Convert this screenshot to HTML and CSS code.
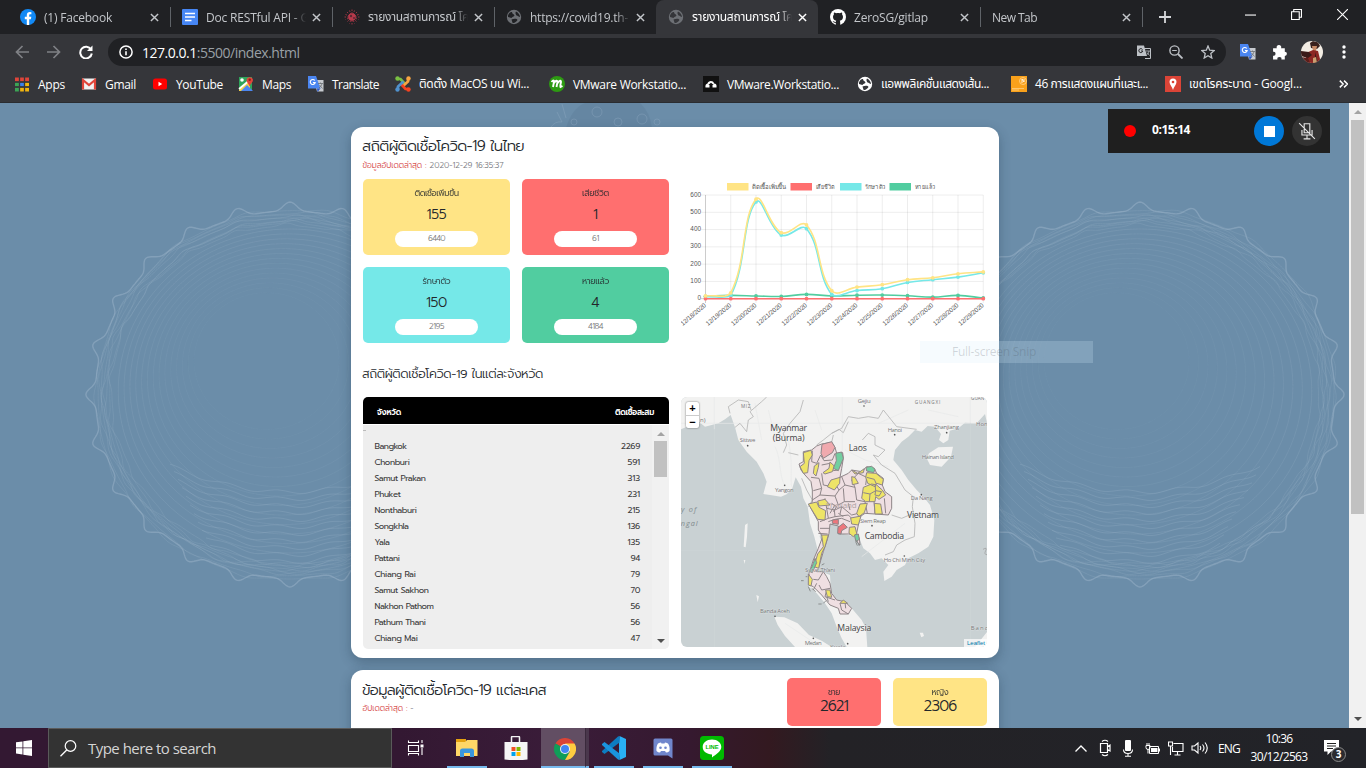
FILE: index.html
```html
<!DOCTYPE html>
<html lang="th">
<head>
<meta charset="utf-8">
<title>รายงานสถานการณ์ โควิด-19</title>
<link rel="stylesheet" href="styles.css">
</head>
<body>
<svg width="0" height="0" class="defs">
  <symbol id="x" viewBox="0 0 10 10"><path d="M1 1l8 8M9 1l-8 8" stroke="currentColor" stroke-width="1.6"/></symbol>
  <symbol id="globe" viewBox="0 0 16 16"><circle cx="8" cy="8" r="7.2" fill="currentColor"/><path d="M2 6.500C3 3.500 5 2.500 6 3C6 5 8 5 8.500 6.500C8 8 6 7.500 5.500 9C4 9 3.500 8 2 8zM10 2.500C12.500 3.500 14 6 14 8C12.500 8 12 6.500 10.500 6.500C9.500 5 9 4 10 2.500zM5.500 10.500C8 9.500 11 9.500 11.500 11C10 13 8.500 14.500 6.500 13.800z" fill="var(--cut)"/></symbol>
  <symbol id="gt" viewBox="0 0 16 16"><path d="M6 4h9.500v11.500H9z" fill="#c8cbd0"/><path d="M0 0h8l4.500 12.500H0z" fill="#4b86f1"/><path d="M9 12.500h3.500L9.500 16z" fill="#2a56c6"/><path d="M6.800 4.500A2.500 2.500 0 1 0 7.200 6.600H4.900" fill="none" stroke="#fff" stroke-width="1.100"/><path d="M10 7.500h5M12.500 6.500v1M14 7.500c-.5 2-1.500 3.500-3 4.500M11.500 9l3 3.500" fill="none" stroke="#6b7075" stroke-width=".8"/></symbol>
</svg>

<div class="tabs">
  <div class="tab"><svg viewBox="0 0 16 16"><circle cx="8" cy="8" r="8" fill="#1289f5"/><path d="M6.800 16V10.200H4.800V7.800H6.800V6.200C6.800 4 8 3 9.800 3L11.400 3.200V5.200H10.300C9.400 5.200 9.200 5.700 9.200 6.300V7.800H11.300L10.900 10.200H9.200V16z" fill="#fff"/></svg><span class="t"><b data-w="68">(1) Facebook</b></span><svg class="x"><use href="#x"/></svg></div>
  <div class="tab"><svg viewBox="0 0 16 16"><rect width="16" height="16" rx="1" fill="#4686f4"/><path d="M3 4.500h10M3 8h10M3 11.500h6.500" stroke="#fff" stroke-width="1.500"/></svg><span class="t"><b data-w="103">Doc RESTful API - G</b></span><svg class="x"><use href="#x"/></svg></div>
  <div class="tab"><svg viewBox="0 0 16 16"><circle cx="8" cy="8" r="3.800" fill="#b83a4b"/><path d="M8 .5v15M.5 8h15M3 3l10 10M13 3L3 13M5.500 1.500l5 13M1.500 5.500l13 5M10.500 1.500l-5 13M14.500 5.500l-13 5" stroke="#b83a4b" stroke-width=".8" stroke-dasharray="1.500 1.200"/><circle cx="7" cy="7" r="1.200" fill="#5b2a34"/><circle cx="10" cy="9" r="1" fill="#5b2a34"/></svg><span class="t"><b data-w="101">รายงานสถานการณ์ โค</b></span><svg class="x"><use href="#x"/></svg></div>
  <div class="tab nosep"><svg class="dim"><use href="#globe"/></svg><span class="t"><b data-w="98">https://covid19.th-</b></span><svg class="x"><use href="#x"/></svg></div>
  <div class="tab active nosep"><svg class="dim"><use href="#globe"/></svg><span class="t"><b data-w="101">รายงานสถานการณ์ โค</b></span><svg class="x"><use href="#x"/></svg></div>
  <div class="tab"><svg viewBox="0 0 16 16"><circle cx="8" cy="8" r="8" fill="#fff"/><path d="M5.800 16v-2.200c-2 .4-2.500-.8-3.200-1.700c1.300-.2 1.500 1.200 3.200.8c0-.5.2-.9.500-1.100C4 11.500 3 10.200 3 7.800c0-1 .4-1.700.9-2.300c-.2-.7-.1-1.500.1-2.100c.8 0 1.500.4 2.100.9c1.200-.3 2.600-.3 3.800 0c.6-.5 1.300-.9 2.100-.9c.2.600.3 1.400.1 2.100c.5.600.9 1.300.9 2.300c0 2.400-1 3.700-3.300 4c.3.300.5.800.5 1.500V16z" fill="#202124"/></svg><span class="t"><b data-w="74">ZeroSG/gitlap</b></span><svg class="x"><use href="#x"/></svg></div>
  <div class="tab"><span class="t"><b data-w="45">New Tab</b></span><svg class="x"><use href="#x"/></svg></div>
  <svg class="plus" viewBox="0 0 12 12"><path d="M6 0v12M0 6h12" stroke="#d5d7da" stroke-width="1.800"/></svg>
  <div class="win">
    <svg viewBox="0 0 10 10"><path d="M0 5.500h10" stroke="#fff"/></svg>
    <svg viewBox="0 0 10 10"><path d="M2.500 2.500V.5h7v7h-2M.5 2.500h7v7h-7z" fill="none" stroke="#fff"/></svg>
    <svg viewBox="0 0 10 10"><path d="M0 0l10 10M10 0L0 10" stroke="#fff"/></svg>
  </div>
</div>

<div class="toolbar">
  <svg class="nav dimnav" viewBox="0 0 14 14"><path d="M14 7H1.500M7.500 1L1.500 7l6 6"/></svg>
  <svg class="nav dimnav" viewBox="0 0 14 14"><path d="M0 7h12.500M6.500 1l6 6-6 6"/></svg>
  <svg class="nav" viewBox="0 0 14 14"><path d="M12 4.500A5.800 5.800 0 1 0 12.800 8.500" stroke-width="2"/><path d="M13.500.5v5.500H8z" fill="#fff" stroke="none"/></svg>
  <div class="omni">
    <svg viewBox="0 0 14 14"><circle cx="7" cy="7" r="6.100" fill="none" stroke="#fff" stroke-width="1.500"/><path d="M7 6.200v4M7 3.500v1.500" stroke="#fff" stroke-width="1.600"/></svg>
    <span class="url"><b data-w="157.500"><i>127.0.0.1</i>:5500/index.html</b></span>
    <svg class="g1" viewBox="0 0 14 14"><path d="M6.500 3.500h7v10H8" fill="none" stroke="#bdc1c6"/><path d="M0 .5h7l3 10.500H0z" fill="#bdc1c6"/><path d="M5.500 4.500A2 2 0 1 0 5.800 6H4" fill="none" stroke="#202124"/><path d="M9 6h4M12 6c-.3 2-1 3-2 3.500M10 7.500l2.500 3" stroke="#bdc1c6" fill="none" stroke-width=".8"/></svg>
    <svg class="g2" viewBox="0 0 14 14"><circle cx="5.500" cy="5.500" r="4.600" fill="none" stroke="#bdc1c6" stroke-width="1.400"/><path d="M9 9l4.500 4.500" stroke="#bdc1c6" stroke-width="1.800"/><path d="M3.200 5.500h4.600" stroke="#bdc1c6"/></svg>
    <svg class="g3" viewBox="0 0 14 14"><path d="M7 1l1.700 4.200 4.500.4-3.400 3 1 4.400L7 10.700 3.200 13l1-4.400-3.400-3 4.500-.4z" fill="none" stroke="#bdc1c6" stroke-width="1.300"/></svg>
  </div>
  <svg class="gt"><use href="#gt"/></svg>
  <svg class="puz" viewBox="0 0 15 15"><path d="M1 4h3.500a2.200 2.200 0 1 1 4 0H12v3.200a2 2 0 1 1 0 4V14.500H8.800a1.900 1.900 0 1 0-3.700 0H1V11a1.900 1.900 0 1 0 0-3.700z" fill="#fff"/></svg>
  <svg class="av" viewBox="0 0 22 22"><defs><clipPath id="ac"><circle cx="11" cy="11" r="11"/></clipPath></defs><g clip-path="url(#ac)"><path d="M0 0h22v22H0z" fill="#f3ede4"/><path d="M9 2l3-2 5 1 2 4-3 3-6-1z" fill="#3a201c"/><path d="M11 5l5 0-1 5-3 0z" fill="#c88a66"/><path d="M5 12l7-3 5 1 3 12H5z" fill="#8c2723"/><path d="M0 10l8 1 3 3-4 3-7-2zM14 11l3 11h-3z" fill="#3a1a18"/><path d="M0 16l7 1 2 5H0z" fill="#5a1f1c"/><path d="M12 17l3-1 1 6h-4z" fill="#c9a071"/></g></svg>
  <svg class="dots" viewBox="0 0 4 14"><circle cx="2" cy="2" r="1.700"/><circle cx="2" cy="7" r="1.700"/><circle cx="2" cy="12" r="1.700"/></svg>
</div>

<div class="marks">
  <div class="m m67"><svg viewBox="0 0 16 16"><path d="M1 1.500h4v4H1z" fill="#e0453a"/><path d="M6 1.500h4v4H6z" fill="#e0453a"/><path d="M11 1.500h4v4h-4z" fill="#e0453a"/><path d="M1 6.500h4v4H1z" fill="#3ca455"/><path d="M6 6.500h4v4H6z" fill="#3c82ee"/><path d="M11 6.500h4v4h-4z" fill="#f2b50f"/><path d="M1 11.500h4v4H1z" fill="#3ca455"/><path d="M6 11.500h4v4H6z" fill="#f2b50f"/><path d="M11 11.500h4v4h-4z" fill="#f2b50f"/><path d="M5.500 1v15M10.500 1v15M0 6h16M0 11h16" stroke="#35363a" stroke-width="1.300"/></svg><b data-w="27">Apps</b></div>
  <div class="m m71"><svg viewBox="0 0 16 16"><path d="M1 2.500h14v11H1z" fill="#f2f2f2"/><path d="M2 13.500V4L8 9l6-5v9.500" fill="none" stroke="#e0453a" stroke-width="2.200"/></svg><b data-w="31">Gmail</b></div>
  <div class="m m86"><svg viewBox="0 0 16 16"><rect x="1" y="2.500" width="14" height="11" rx="2.500" fill="#f00"/><path d="M6.500 5.800v4.400L10.200 8z" fill="#fff"/></svg><b data-w="47">YouTube</b></div>
  <div class="m m70"><svg viewBox="0 0 16 16"><path d="M1 1h13v14H1z" fill="#2fa35a"/><path d="M1 14L12 3v12H1z" fill="#f3d04a"/><path d="M3 15l6-6 6 6z" fill="#4b86f1"/><path d="M1 13L13 3" stroke="#fff" stroke-width="1.800"/><path d="M11.500 10.500C11 8 8.500 6.500 8.500 4a3.300 3.300 0 0 1 6.500 0c0 2.500-3 4-3.500 6.500z" fill="#e0453a"/><circle cx="11.700" cy="3.800" r="1.200" fill="#8e2019"/><circle cx="4" cy="4" r="1.800" fill="#fff"/></svg><b data-w="29">Maps</b></div>
  <div class="m m87"><svg><use href="#gt"/></svg><b data-w="47">Translate</b></div>
  <div class="m m154"><svg viewBox="0 0 16 16" fill="none" stroke-width="2.700"><path d="M3 3l2.500 0L10.500 8.500" stroke="#7ac143"/><path d="M13 3v2.500L7.500 10.500" stroke="#f9a541"/><path d="M13 13h-2.500L5.500 7.500" stroke="#f44321"/><path d="M3 13v-2.500L8.500 5.500" stroke="#5091cd"/><g stroke="none"><circle cx="2.500" cy="2.500" r="2.200" fill="#7ac143"/><circle cx="13.500" cy="2.500" r="2.200" fill="#f9a541"/><circle cx="13.500" cy="13.500" r="2.200" fill="#f44321"/><circle cx="2.500" cy="13.500" r="2.200" fill="#5091cd"/></g></svg><b data-w="110">ติดตั้ง MacOS บน Wi...</b></div>
  <div class="m m154"><svg viewBox="0 0 16 16"><circle cx="8" cy="8" r="8" fill="#2d9a12"/><path d="M2.500 6Q5 3 5 6L4 11M5 7Q8 3 8.500 6L7.500 11M8.500 7Q12 3 12 6Q11 10 11.500 11L13.500 10" fill="none" stroke="#fff" stroke-width="1.900"/></svg><b data-w="113">VMware Workstatio...</b></div>
  <div class="m m154"><svg viewBox="0 0 16 16"><path d="M0 0h16v16H0z" fill="#111"/><path d="M2.500 11.500C2 9 3 8 4.500 7.500C5 4.500 10.500 4 11 7.500C13 7.500 14 9 13.500 11.500H9.500V9h1.200L8 6.800 5.300 9h1.200v2.500z" fill="#fff"/></svg><b data-w="112">VMware.Workstatio...</b></div>
  <div class="m m154"><svg class="lite"><use href="#globe"/></svg><b data-w="108">แอพพลิเคชั่นแสดงเส้น...</b></div>
  <div class="m m154"><svg viewBox="0 0 16 16"><path d="M0 0h16v16H0z" fill="#f9a11b"/><path d="M1 12.500h12M1 14h7" stroke="#ffd591" stroke-width=".7"/><circle cx="12" cy="5" r="3.500" fill="none" stroke="#ffd591" stroke-width=".8"/><path d="M11 7V3l2 3V3" stroke="#fff" fill="none" stroke-width=".8"/></svg><b data-w="113">46 การแสดงแผนที่และเ...</b></div>
  <div class="m m154"><svg viewBox="0 0 16 16"><path d="M0 0h16v16H0z" fill="#db4437"/><path d="M8 14C7.500 11 4.500 9 4.500 6a3.500 3.500 0 0 1 7 0c0 3-3 5-3.500 8z" fill="#fff"/><circle cx="8" cy="6" r="1.300" fill="#db4437"/></svg><b data-w="113">เขตโรคระบาด - Googl...</b></div>
  <svg class="more" viewBox="0 0 8 7"><path d="M.7.500l3 3-3 3M4.500.500l3 3-3 3" fill="none" stroke="#fff" stroke-width="1.300"/></svg>
</div>

<div class="page">
  <svg class="bg" id="rings" viewBox="0 103 1349 625" width="1349" height="625"></svg>
  <main>
    <section class="card">
      <h1><b data-w="162">สถิติผู้ติดเชื้อโควิด-19 ในไทย</b></h1>
      <p class="upd"><b data-w="141"><em>ข้อมูลอัปเดตล่าสุด :</em> 2020-12-29 16:35:37</b></p>
      <div class="grid">
        <div class="stats">
          <div class="s yel"><small data-w="44">ติดเชื้อเพิ่มขึ้น</small><strong data-w="20">155</strong><span><u data-w="17">6440</u></span></div>
          <div class="s red"><small data-w="27">เสียชีวิต</small><strong>1</strong><span><u data-w="7">61</u></span></div>
          <div class="s cya"><small data-w="28">รักษาตัว</small><strong data-w="21">150</strong><span><u data-w="15">2195</u></span></div>
          <div class="s gre"><small data-w="27">หายแล้ว</small><strong>4</strong><span><u data-w="15">4184</u></span></div>
        </div>
        <svg class="chart" id="chart" viewBox="681 179 306 164" width="306" height="164"></svg>
      </div>
      <h2><b data-w="181">สถิติผู้ติดเชื้อโควิด-19 ในแต่ละจังหวัด</b></h2>
      <div class="grid">
        <div class="table">
          <div class="th"><b data-w="24">จังหวัด</b><b data-w="39">ติดเชื้อสะสม</b></div>
          <div class="tb"><div class="rows" id="rows"></div><div class="sb"><i class="up"></i><i class="thumb"></i><i class="down"></i></div></div>
        </div>
        <div class="map">
<svg viewBox="18 21 918 750" width="306" height="250">
<rect x="18" y="21" width="918" height="750" fill="#c9d1d3"/>
<g fill="#f2f2f1">
<path d="M18 21H936V98L930 72 905 100 870 98 850 115 824 122 820 150 805 160 792 150 798 132 780 110 758 108 740 125 720 120 700 140 680 155 660 180 655 210 680 240 700 270 725 300 745 320 765 345 778 390 775 440 760 470 730 490 700 505 690 525 665 540 650 560 628 573 625 545 640 525 620 505 600 510 585 490 565 475 555 450 540 440 520 435 495 430 490 405 470 395 440 402 434 440 442 460 425 500 415 540 440 545 465 555 468 600 480 630 505 640 530 655 560 690 573 715 577 771H515L500 745 485 710 470 670 450 640 425 610 402 590 402 550 415 510 428 480 418 440 405 400 398 350 385 325 378 290 362 262 352 295 335 313 318 320 290 316 265 312 275 275 265 250 245 215 215 185 190 150 180 112 167 75 150 88 130 100 90 110 72 95 18 118Z"/>
<path d="M298 680L328 682 368 700 402 735 440 752 470 771H360L330 738 308 705Z"/><path d="M762 190L790 172 834 170 828 200 800 230 765 225 755 205ZM210 405l8-5-2 40-4 32-6-2zM244 615l8 4-4 18zM734 728l10 0 3 10-8 4zM900 771l36-45v45zM250 190l10 22-14-6zM206 510l5 0-2 12z"/></g>
<g stroke="#e7e8e8" stroke-width="2" fill="none"><path d="M118 21V118M502 21V400M886 21V98M18 100H936"/><path d="M340 150C355 230 345 260 350 290M300 170C320 210 310 250 330 290M610 100L700 60M760 60L850 80M510 180L570 210 640 230M560 500L690 400M330 700L420 760M240 40L260 150M280 60L300 140M420 60L440 120"/></g>
<path d="M118 118V771M886 98V771M18 482H415" stroke="#d0d7d9" stroke-width="1.500"/>
<g stroke="#b4b4b4" stroke-width="2.500" fill="none"><path d="M180 112L195 100 215 125 220 90 235 80 225 65 260 35 275 21M165 70L160 50 190 30 220 35 228 60M325 188L335 165 325 130 345 100 375 65 385 30M425 165L445 150 470 130 500 115 520 80 550 85 580 80 610 85 625 60 665 110 725 118M470 130L492 118 505 128 520 95M562 150L580 130 600 140 600 165 630 180 610 200 595 195 620 225 660 250 690 300 715 320 712 350 720 400 718 440 690 450 665 465 655 485 630 495M470 157L475 135M370 195L340 188M650 375L680 385 715 370M380 265L395 300 412 330 400 350"/></g>
<path class="pv" fill="#efdfe2" d="M385 185L410 180 425 168 440 162 470 157 480 172 485 190 503 188 505 205 500 235 495 262 520 250 530 240 560 245 575 230 598 235 605 250 625 265 622 285 630 305 650 320 650 355 640 375 600 372 570 370 555 380 550 405 545 430 553 445 555 465 545 455 540 435 520 432 490 432 490 408 465 402 462 430 458 445 445 485 430 535 425 545 445 545 455 560 465 580 470 610 485 630 510 635 530 655 520 672 495 672 490 655 465 645 440 615 415 590 403 585 402 550 415 510 430 475 443 440 430 420 430 395 405 350 412 335 412 300 408 275 390 255 378 240 372 222 385 215Z"/>
<path class="pv" fill="none" d="M412 182L410 215 425 220 437 195 447 212 472 210 480 190M440 225L465 220 475 242 490 240M408 262L432 265 440 295 415 302M440 250L445 285 462 288M440 295L435 315 412 330M435 315L480 318 492 300 480 280M492 300L510 285 540 292 545 330 570 335M510 285L500 260M540 292L530 270 550 250 575 262 572 285M505 295L508 335 540 335M480 318L490 345 508 335M450 325L455 355 480 360 500 350 530 375 550 370M455 355L460 385 480 380 478 360 M480 380L520 375 530 385M460 395L480 388 500 385 525 395M435 415H462M570 335L577 370M597 335L600 370M628 325L632 370M435 395L460 385M430 430L458 432M480 345L465 370M490 370L505 380M445 545L430 570 415 568M465 595L440 600 432 585M425 580L415 600M455 600L450 620 480 630M495 640L500 660 520 672M510 635L512 655M470 340L485 350 475 365 M500 350L495 372M520 340L525 360"/>
<g class="pv" fill="#eee467"><path d="M385 188L408 181 412 195 402 212 398 248 385 250 375 230 388 220ZM418 228L432 218 430 232 423 258 415 250ZM444 248L462 235 465 216 478 228 472 245 450 252ZM457 290L468 270 495 262 494 280 478 300ZM530 240L548 250 568 236 565 248 540 252ZM530 260L540 262 550 280 532 284ZM575 248L603 250 625 268 622 285 605 280 600 290 578 280 572 262ZM565 292L590 282 605 285 622 300 632 315 612 328 602 320 600 335 572 335 560 325ZM555 342L577 340 568 368 552 380 545 370ZM598 340L617 342 622 372 600 372ZM428 333L450 328 465 345 432 348ZM400 342L425 336 432 352 452 362 450 390 428 388ZM527 384L558 378 550 405 530 402ZM523 412L540 410 545 430 535 440 522 430ZM440 435L460 435 450 470 440 490 431 535 417 530 428 492 445 470ZM400 552L412 568 408 588 400 585ZM452 600L465 600 470 622 457 620ZM495 640L505 630 518 640ZM602 302L620 305 612 318 600 315Z"/><path fill="none" d="M575 262L598 268 604 282M565 308L585 312 602 302M585 312L583 335M600 282L602 302"/></g>
<g class="pv"><path fill="#f0a9ae" d="M438 190L441 163 470 155 480 172 472 188 445 205Z"/><path fill="#72cfa0" d="M482 190L500 186 505 205 490 242 475 235 484 212ZM573 232L590 229 600 238 596 248 575 243ZM538 435L550 432 553 448 543 455ZM420 505L425 518 412 548 404 545 415 520Z"/><path fill="#ed767c" d="M489 412L505 400 517 412 500 422 498 432 488 430ZM472 390L490 388 490 403 472 400Z"/></g>
<path d="M545 450l8 18M542 455l5 12M400 590l6 14M410 595l12 10M430 642h10M445 640l8-8M455 620l5 15M440 525l8-4M456 535l5 5M378 572h8M392 560h5" stroke="#8b8f8f" stroke-width="3"/>
<g class="lb big"><text x="286" y="122" textLength="110">Myanmar</text><text x="293" y="154" textLength="96">(Burma)</text><text x="521" y="183" textLength="55">Laos</text><text x="696" y="384" textLength="96">Vietnam</text><text x="569" y="448" textLength="118">Cambodia</text><text x="487" y="724" textLength="102">Malaysia</text></g>
<g class="lb sm"><text x="548" y="39" textLength="39">Gejiu</text><text x="719" y="41" textLength="77" class="cap">GUANGXI</text><text x="638" y="125" textLength="43">Hanoi</text><text x="777" y="118" textLength="75">Zhanjiang</text><text x="194" y="157" textLength="47">Sittwe</text><text x="740" y="206" textLength="97">Hainan Island</text><text x="300" y="305" textLength="56">Yangon</text><text x="707" y="331" textLength="66">Da Nang</text><text x="555" y="399" textLength="78">Siem Reap</text><text x="626" y="517" textLength="125">Ho Chi Minh City</text><text x="390" y="546" textLength="91">Surat Thani</text><text x="255" y="669" textLength="90">Banda Aceh</text><text x="389" y="765" textLength="51">Medan</text><text x="887" y="720" textLength="66">Banda</text><text x="903" y="107">Hong</text><text x="198" y="53" textLength="28" class="cap">MIZ</text><text x="888" y="29" class="cap">GUAN</text><text x="75" y="97">n)</text><text x="465" y="778">Kuala</text></g>
<text x="452" y="355" textLength="93" class="lb thai">Thailand</text>
<g class="lb sea"><text x="18" y="367" textLength="46">y of</text><text x="17" y="408" textLength="51">ngal</text></g>
<path d="M924 478q14-8 8 4t4 12" fill="none" stroke="#999" stroke-width="2"/>
<g fill="#555"><circle cx="567" cy="48" r="2.500"/><circle cx="659" cy="134" r="2.500"/><circle cx="815" cy="128" r="2.500"/><circle cx="218" cy="167" r="2.500"/><circle cx="329" cy="286" r="2.500"/><circle cx="739" cy="314" r="2.500"/><circle cx="591" cy="407" r="2.500"/><circle cx="688" cy="498" r="2.500"/><circle cx="300" cy="679" r="2.500"/><circle cx="415" cy="745" r="2.500"/><circle cx="518" cy="761" r="2.500"/></g>
</svg>
          <div class="zoom"><span>+</span><span>−</span></div>
          <div class="leaf"><b data-w="18">Leaflet</b></div>
        </div>
      </div>
    </section>
    <section class="card c2">
      <div class="head"><h1><b data-w="184">ข้อมูลผู้ติดเชื้อโควิด-19 แต่ละเคส</b></h1><p class="upd"><b data-w="51"><em>อัปเดตล่าสุด :</em> -</b></p></div>
      <div class="g red"><small data-w="12">ชาย</small><strong data-w="28">2621</strong></div>
      <div class="g yel"><small data-w="17">หญิง</small><strong data-w="33">2306</strong></div>
    </section>
  </main>
  <div class="pscroll"><i class="up"></i><i class="thumb"></i><i class="down"></i></div>
  <div class="snip"><b data-w="84">Full-screen Snip</b></div>
  <div class="rec"><i class="dot"></i><b data-w="38">0:15:14</b><i class="stop"><s></s></i><i class="mic"><svg viewBox="0 0 16 16" width="18" height="18" fill="none" stroke="#e5e5e5"><path d="M5.500 1.500h5v8h-5zM3.500 7v4.500h9V7M8 11.500v3M5 15h6M1 1l14 14"/></svg></i></div>
</div>

<div class="task">
  <div class="start"><svg viewBox="0 0 16 16" width="16" height="16"><path d="M0 2.300l6.500-.9v6.100H0zM7.300 1.300L16 0v7.500H7.300zM0 8.300h6.500v6.200L0 13.600zM7.300 8.300H16V16l-8.700-1.300z" fill="#fff"/></svg></div>
  <div class="search"><svg viewBox="0 0 17 17" width="17" height="17"><circle cx="10.500" cy="6" r="5.300" fill="none" stroke="#fff" stroke-width="1.200"/><path d="M6.700 10L.5 16.300" stroke="#fff" stroke-width="1.300"/></svg><b data-w="128">Type here to search</b></div>
  <div class="ti tv"><svg viewBox="0 0 18 16" width="18" height="16" fill="none" stroke="#fff" stroke-width="1.100"><path d="M1.500.500v2h10v-2M1.500 5.500h10v6h-10zM1.500 15.500v-2h10v2M15 0v3M15 8v7"/><path d="M13.500 4.500h3v3h-3z" fill="#fff" stroke="none"/></svg></div>
  <div class="ti w on o1"><svg viewBox="0 0 22 20" width="22" height="20"><path d="M0 1h10v4H0z" fill="#e5a210"/><path d="M0 4h9l2-2h10.500v16H0z" fill="#ffd767"/><path d="M4 19v-6q0-2.500 2.500-2.500h9q2.500 0 2.500 2.500v6h-4v-4H8v4z" fill="#3a96dd"/></svg></div>
  <div class="ti w o2"><svg viewBox="0 0 24 24" width="24" height="24"><path d="M7.500 6V1.500q0-1 1-1h6q1 0 1 1V6" fill="none" stroke="#f2f2f2" stroke-width="1.500"/><path d="M.5 6h23v17.500q-11 1.500-23 0z" fill="#f5f5f5"/><path d="M7.500 11h4v4h-4z" fill="#f25022"/><path d="M12.500 11h4v4h-4z" fill="#7fba00"/><path d="M7.500 16h4v4h-4z" fill="#00a4ef"/><path d="M12.500 16h4v4h-4z" fill="#ffb900"/></svg></div>
  <div class="ti act on"><svg viewBox="0 0 22 22" width="22" height="22"><path d="M11 11L1.470 5.500A11 11 0 0 1 20.530 5.500z" fill="#db4437"/><path d="M11 11L1.470 5.500A11 11 0 0 0 11 22L15.800 13.500z" fill="#0f9d58"/><path d="M11 5.500H20.530A11 11 0 0 1 11 22L15.800 13.700z" fill="#ffcd40"/><circle cx="11" cy="11" r="5" fill="#f1f1f1"/><circle cx="11" cy="11" r="4" fill="#4285f4"/></svg></div>
  <div class="ti act2 on"></div>
  <div class="ti w on o3"><svg viewBox="0 0 24 24" width="24" height="24"><path d="M17.500 0L24 3v18l-6.500 3L17 17V7z" fill="#29b0f5"/><path d="M17.500 0v6.500L2.500 18 0 16V15L16 .5z" fill="#0d7cc1"/><path d="M17.500 24v-6.500L2.500 6 0 8v1l16 14.500z" fill="#1a94dd"/></svg></div>
  <div class="ti w on o4"><svg viewBox="0 0 20 21" width="20" height="21"><path d="M2 .5h16q1.500 0 1.500 1.500v18.500L15 17.500H2Q.5 17.500.5 16V2Q.5.500 2 .5z" fill="#7086cc"/><path d="M3.500 13Q3 8 5 5.500Q7 4.500 8 4.500l.5 1h3l.5-1q1 0 3 1Q17 8 16.500 13q-1.500 1.500-3.500 1.500l-1-1.500H8l-1 1.500q-2 0-3.500-1.500z" fill="#fff"/><circle cx="7.500" cy="9.800" r="1.300" fill="#7086cc"/><circle cx="12.500" cy="9.800" r="1.300" fill="#7086cc"/></svg></div>
  <div class="ti w on o5"><svg viewBox="0 0 24 24" width="24" height="24"><rect width="24" height="24" rx="3.500" fill="#00b900"/><path d="M12 3.500c5.500 0 9.300 3.300 9.300 7.500 0 4.500-5.500 7.500-9.300 10.500v-3C6.500 18.200 2.700 15.200 2.700 11S6.500 3.500 12 3.500z" fill="#fff"/><text x="5.500" y="13.200" font-family="Liberation Sans" font-weight="700" font-size="5.800" textLength="13" fill="#00b900">LINE</text></svg></div>
  <div class="tray">
    <svg class="t1" viewBox="0 0 12 7" width="12" height="7"><path d="M.5 6.500L6 1l5.500 5.500" fill="none" stroke="#fff" stroke-width="1.300"/></svg>
    <svg class="t2" viewBox="0 0 12 18" width="12" height="18" fill="none" stroke="#fff" stroke-width="1.200"><path d="M1.500 4.500h7v9h-7zM8.500 7.500l2.500-1.500v6l-2.500-1.500M3 2.500Q6 0 9 2.500M3 15.500Q6 18 9 15.500"/></svg>
    <svg class="t3" viewBox="0 0 12 17" width="12" height="17"><rect x="3" width="6" height="11" rx="1" fill="#fff"/><path d="M1.500 9.500q0 4 4.500 4t4.500-4M6 13.500V16M3 16.300h6" fill="none" stroke="#fff" stroke-width="1.100"/></svg>
    <svg class="t4" viewBox="0 0 16 13" width="16" height="13" fill="none" stroke="#fff"><path d="M4.500 4.500h9v7h-9zM14.500 6.500v3M1 3.500h4v2Q5 7.500 3 7.500T1 5.500zM2 1v2M4 1v2M3 7.500v4"/><path d="M6 6h6.500v4H6z" fill="#fff" stroke="none"/></svg>
    <svg class="t5" viewBox="0 0 16 15" width="16" height="15" fill="none" stroke="#fff" stroke-width="1.100"><path d="M5.500 2.500h9.500v8H4.500V6M9.500 10.500v3M6.500 14h6M.5 1h4v4h-4zM2.500 5v9"/></svg>
    <svg class="t6" viewBox="0 0 17 14" width="17" height="14" fill="none" stroke="#fff" stroke-width="1.100"><path d="M1 5h2.500L7 2v10L3.500 9H1zM9 5q1.500 2 0 4M11.500 3.500q3 3.500 0 7M14 1.500q4.500 5.500 0 11"/></svg>
    <b class="eng" data-w="22">ENG</b>
    <div class="clock"><b data-w="27">10:36</b><b data-w="57">30/12/2563</b></div>
    <div class="note"><svg viewBox="0 0 15 15" width="15" height="15"><path d="M0 0h15v11.500H7L3.500 15v-3.500H0z" fill="#fff"/><path d="M3 3.500h9M3 6h9M3 8.500h6" stroke="#222"/></svg><span>3</span></div>
  </div>
</div>
<script src="app.js"></script>
</body>
</html>
```
FILE: styles.css
```css
*{box-sizing:border-box}
body{margin:0;width:1366px;height:768px;overflow:hidden;display:flex;flex-direction:column;font-family:"Open Sans","Noto Sans","Noto Sans Thai",sans-serif;font-size:12px;color:#fff}
b,i,u,s,em{font-weight:inherit;font-style:normal;text-decoration:none}
b,u,small,strong{white-space:nowrap}
svg{flex:none;display:block}
h1,h2,p{margin:0;font-weight:400}
.defs{position:absolute}
.tabs{height:34px;background:#202124;display:flex;align-items:center;padding-left:8px;flex:none}
.tab{width:162px;height:34px;display:flex;align-items:center;padding:0 11px 0 12px;position:relative;color:#c3c6ca}
.tab::after{content:"";position:absolute;right:-1px;top:7px;width:1px;height:20px;background:#5f6368}
.tab.nosep::after{display:none}
.tab>svg{width:16px;height:16px;margin-right:8px}
.tab>svg.x{width:9px;height:9px;margin:0 0 0 6px}
.t{flex:1;overflow:hidden;-webkit-mask:linear-gradient(90deg,#000 86%,transparent 100%)}
.active{background:#35363a;border-radius:8px 8px 0 0;color:#fff}
.dim{color:#6d7075;--cut:#202124}
.active .dim{--cut:#35363a}
.lite{color:#fff;--cut:#35363a}
.plus{width:12px;height:12px;margin-left:17px}
.win{display:flex;gap:35px;margin-left:74px;padding-bottom:6px}
.win svg{width:11px;height:11px}
.toolbar{height:36px;background:#35363a;display:flex;align-items:center;padding-left:15px;flex:none}
.nav{width:14px;height:14px;margin-right:18px;fill:none;stroke:#fff;stroke-width:1.700}
.dimnav{stroke:#7f8185}
.omni{width:1118px;height:28px;border-radius:14px;background:#202124;display:flex;align-items:center;margin-left:-3px;padding-left:11px;font-size:14px}
.omni svg{width:14px;height:14px}
.url{margin-left:9px;color:#9aa0a6;flex:1}
.url i{color:#fff}
.g2{margin-left:18px}.g3{margin:0 11px 0 18px}
.gt{width:16px;height:16px;margin-left:14px}
.puz{width:16px;height:16px;margin-left:16px}
.av{width:22px;height:22px;margin-left:13px}
.dots{width:4px;height:14px;fill:#fff;margin-left:19px}
.marks{height:33px;background:#35363a;border-bottom:1px solid #2a2c30;display:flex;align-items:center;padding:0 0 4px 14px;flex:none}
.m{display:flex;align-items:center;gap:8px;flex:none}
.m svg{width:16px;height:16px}
.m67{width:67px}.m71{width:71px}.m86{width:86px}.m70{width:70px}.m87{width:87px}.m154{width:154px}
.more{width:9px;height:8px;margin-left:20px}
.page{height:625px;flex:none;position:relative;background:#6b8da9;overflow:hidden;font-family:"Prompt","Kanit",Inter,"Open Sans",sans-serif;color:#23272b}
.bg{position:absolute;left:0;top:0}
main{position:relative;width:648px;margin:24px 0 0 351px}
.card{height:531px;background:#fff;border-radius:12px;padding:9px 12px;box-shadow:0 4px 12px rgba(20,40,60,.3)}
h1{font-size:15px;line-height:22px;font-weight:300;margin-left:-1px}
.upd{font-size:8px;line-height:14px;color:#77777d;font-weight:300;margin-left:-.5px}
.upd em{color:#d43c3c}
.card:not(.c2) h1{line-height:20px;padding-bottom:2px}
.grid{display:grid;grid-template-columns:306px 306px;gap:12px}
.stats{display:grid;grid-template-columns:147px 147px;grid-auto-rows:76px;gap:12px;margin-top:7px}
.chart{margin-top:7px}
.s,.g{border-radius:5px;display:flex;flex-direction:column;align-items:center}
.s small{font-size:8.500px;line-height:14px;margin-top:8px;opacity:.8}
.s strong,.g strong{font-size:14px;line-height:20px;font-weight:300}
.s strong{margin-top:4px}
.s span{width:83px;height:16px;border-radius:8px;background:#fff;margin-top:6px;text-align:center;font-size:8px;line-height:15px;color:#777;font-weight:300}
.yel{background:#ffe485}.red{background:#ff6f6f}.cya{background:#75e8e8}.gre{background:#51cda0}
h2{font-size:12.500px;line-height:20px;margin:21px 0 13px -1px;font-weight:300}
.table{height:252px;border-radius:5px;overflow:hidden;background:#eee}
.th{height:27px;background:#000;color:#fff;display:flex;justify-content:space-between;align-items:center;padding:2px 15px 0 14px;font-size:8px;font-weight:600}
.tb{height:225px;display:flex;border-top:1px solid #fff}
.rows{flex:1;padding:14px 12px 0 11.5px;font-size:8.500px;color:#3c3c3c;position:relative}
.rows::before{content:"";position:absolute;left:0;top:5px;width:3px;height:1px;background:#bbb}
.rows div{height:16px;line-height:16px;display:flex;justify-content:space-between}
.sb{width:17px;background:#f1f1f1;display:flex;flex-direction:column;align-items:center;padding:7px 0 6px}
.sb .up,.sb .down,.pscroll .up,.pscroll .down{border:4px solid transparent;border-top-width:0;border-bottom-color:#a3a3a3;width:0;height:0;flex:none}
.sb .down,.pscroll .down{border-top:4px solid #505050;border-bottom-width:0;margin-top:auto}
.sb .thumb{width:13px;height:36px;background:#c1c1c1;margin-top:5px;flex:none}
.map{position:relative;height:250px;border-radius:6px;overflow:hidden}
.pv{stroke:#8e8588;stroke-width:3;stroke-linejoin:round}
.lb{font-family:"Open Sans",sans-serif;paint-order:stroke;stroke:rgba(245,245,244,.6);stroke-width:2px}
.lb.big{font-size:26px;font-weight:500;fill:#3f3f43}
.lb.sm{font-size:18px;font-weight:500;fill:#737578}
.lb .cap{font-size:14px}
.lb.thai{font-size:24px;fill:#b0a4a6;stroke:none}
.lb.sea{font-size:22px;font-style:italic;fill:#828b8e;stroke:none}
.zoom{position:absolute;left:5px;top:5px;width:13px;border-radius:2px;background:#fff;box-shadow:0 0 2px rgba(0,0,0,.6);color:#000;font:700 11px/13px "Liberation Sans",sans-serif;text-align:center}
.zoom span{display:block;height:13px}
.zoom span+span{border-top:1px solid #ccc;line-height:12px}
.leaf{position:absolute;right:0;bottom:0;width:23px;height:8px;background:rgba(255,255,255,.7);font:6px/8px "Liberation Sans",sans-serif;color:#0078a8;padding-left:3px}
.c2{margin-top:12px;display:flex;padding-top:8px}
.head{flex:1;padding-top:1px}
.g{width:94px;height:48px;margin-left:12px;padding-top:8px}
.g small{font-size:8px;line-height:12px;opacity:.8}
.g strong{font-size:15px;line-height:16px}
.pscroll{position:absolute;right:0;top:0;width:17px;height:625px;background:#f1f1f1;display:flex;flex-direction:column;align-items:center;padding:7px 0}
.pscroll .thumb{width:13px;height:394px;background:#c1c1c1;margin-top:6px;flex:none}
.snip{position:absolute;left:920px;top:238px;width:173px;height:22px;background:rgba(215,235,250,.22);padding-left:32px;font:12px/22px "Open Sans",sans-serif;color:rgba(70,80,90,.22)}
.rec{position:absolute;left:1108px;top:6px;width:222px;height:44px;background:#1f1f1f;display:flex;align-items:center;padding-left:16px;color:#fff;font:700 12px/16px "Open Sans",sans-serif}
.rec b{width:102px;margin-left:16px;padding-bottom:3px}
.dot{width:12px;height:12px;border-radius:6px;background:#f00;flex:none}
.stop,.mic{width:30px;height:30px;border-radius:15px;background:#0078d7;display:grid;place-items:center;flex:none}
.stop s{width:11px;height:11px;background:#fff}
.mic{background:#333;margin-left:8px}
.task{height:40px;flex:none;display:flex;background:linear-gradient(90deg,#331832 0,#331832 400px,#3a1c39 560px,#35192f 690px,#331920 770px,#232226 830px,#222328 100%);font-family:"Open Sans",sans-serif}
.start{width:48px;display:grid;place-items:center}
.search{width:344px;background:#333;border:1px solid #5a5a5a;display:flex;align-items:center;padding-left:11px;gap:11px;font-size:15px;color:#d5d5d5}
.ti{display:grid;place-items:center;width:49px}
.tv{width:47px}
.w{width:40px}
.on{border-bottom:2px solid #76b9ed;padding-top:2px}
.o1{margin-left:8px}.o2{margin-left:9px;width:39px}.o3{margin-left:5px}.o4,.o5{margin-left:9px}
.act{width:44px;background:#624e63;margin-left:6px;padding:3px 0 0 4px}
.act2{width:4px;background:#4a374c;border-left:1px solid #3a2a3c}
.tray{flex:1;display:flex;align-items:center;padding-left:343px}
.t2{margin-left:12px}.t3{margin-left:11px}.t4{margin-left:11px}.t5{margin-left:7px}.t6{margin-left:7px}
.eng{margin-left:10px;width:22px}
.clock{width:58px;margin-left:10px;text-align:center;line-height:18px}
.clock b{display:table;margin:0 auto}
.note{position:relative;margin:-2px 0 0 16px}
.note span{position:absolute;left:7px;top:7px;width:15px;height:15px;border-radius:8px;border:1px solid #8a8a8a;background:#2b2b2f;font-size:10px;font-weight:700;line-height:13px;text-align:center}
```
FILE: app.js
```js
const rows = [["Bangkok",2269,32],["Chonburi",591,35],["Samut Prakan",313,51],["Phuket",231,26],["Nonthaburi",215,42],["Songkhla",136,34],["Yala",135,15],["Pattani",94,25],["Chiang Rai",79,41],["Samut Sakhon",70,54],["Nakhon Pathom",56,59],["Pathum Thani",56,51],["Chiang Mai",47,43]];
document.getElementById("rows").innerHTML = rows.map(r => `<div><b data-w="${r[2]}">${r[0]}</b><b data-w="${r[1] > 999 ? 19 : r[1] > 99 ? 12.5 : 9.5}">${r[1]}</b></div>`).join("");

// Line chart
const X = i => 705.5 + i * 25.25, Y = v => 298.7 - v * 0.1728;
let out = "";
for (let v = 0; v <= 600; v += 100) out += `<path d="M701 ${Y(v)}H983.3" stroke="#000" stroke-opacity="${v ? .07 : .2}"/><text x="701" y="${Y(v) + 1.5}" text-anchor="end">${v}</text>`;
for (let i = 0; i < 12; i++) out += `<path d="M${X(i)} 195V303" stroke="#000" stroke-opacity="${i ? .07 : .2}"/><text transform="translate(${X(i) + 1} 306) rotate(-40)" text-anchor="end" textLength="31">12/${18 + i}/2020</text>`;
const series = [["#51cda0",[14,19,16,13,25,16,20,21,17,9,19,4]],["#75e8e8",[12,18,560,368,405,25,47,58,94,110,125,150]],["#ff6f6f",Array(12).fill(0)],["#ffe485",[16,34,576,382,427,46,67,81,110,121,144,155]]];
for (const [c, d] of series) {
  const p = d.map((v, i) => [X(i), Y(v)]), cp = p.map((q, i) => {
    const a = p[i - 1] || q, b = p[i + 1] || q;
    const d1 = Math.hypot(q[0]-a[0], q[1]-a[1]), d2 = Math.hypot(b[0]-q[0], b[1]-q[1]), s = d1 + d2;
    const f = .4 * d1 / s, g = .4 * d2 / s;
    return [q[0]-f*(b[0]-a[0]), Math.min(q[1]-f*(b[1]-a[1]), 298.7), q[0]+g*(b[0]-a[0]), Math.min(q[1]+g*(b[1]-a[1]), 298.7)];
  });
  let s = "M" + p[0];
  for (let i = 1; i < 12; i++) s += `C${cp[i-1][2]} ${cp[i-1][3]} ${cp[i][0]} ${cp[i][1]} ${p[i]}`;
  out += `<path d="${s}" fill="none" stroke="${c}" stroke-width="1.6"/>` + p.map(q => `<circle cx="${q[0]}" cy="${q[1]}" r="1.9" fill="${c}"/>`).join("");
}
[[727,"#ffe485","ติดเชื้อเพิ่มขึ้น",34],[790.5,"#ff6f6f","เสียชีวิต",19],[840,"#75e8e8","รักษาตัว",21],[889.5,"#51cda0","หายแล้ว",21]].forEach(l => out += `<rect x="${l[0]}" y="183" width="21.500" height="7.500" fill="${l[1]}"/><text x="${l[0] + 25}" y="188.500" textLength="${l[3]}" lengthAdjust="spacingAndGlyphs">${l[2]}</text>`);
document.getElementById("chart").innerHTML = `<g font-family="Liberation Sans, sans-serif" font-size="6.4" fill="#555">${out}</g>`;

// Wavy rings behind the cards; the outline is slightly wider than tall
function ring(cx, cy, r, amp, n, ph, w, o, kx = 1.06) {
  let s = "";
  for (let k = 0; k <= 720; k++) {
    const a = k * Math.PI / 360, e = Math.pow(Math.abs(Math.cos(n * a / 2 + ph)), 7) * amp;
    s += (k ? "L" : "M") + (cx + kx * (r + e) * Math.cos(a)).toFixed(1) + " " + (cy + (r + e) * Math.sin(a)).toFixed(1);
  }
  return `<path d="${s}Z" fill="none" stroke="#9bb4c9" stroke-width="${w}" stroke-opacity="${o}"/>`;
}
// Ripples across the lower part of a disc
function ripple(cx, y, half, o) {
  let s = "";
  for (let x = -half; x <= half; x += 4) s += (x > -half ? "L" : "M") + (cx + x) + " " + (y - x * x / half / 4.5 + Math.sin(x / 8) * 1.8).toFixed(1);
  return `<path d="${s}" fill="none" stroke="#9bb4c9" stroke-width="1" stroke-opacity="${o}"/>`;
}
let bg = "";
for (const cx of [290, 1140]) {
  bg += ring(cx, 394.5, 183.5, 9, 24, 0, 1.4, .5);
  for (let i = 0; i < 9; i++) bg += ring(cx + Math.sin(i * 2) * 3, 394 + Math.cos(i * 3) * 3, 182 - i * 1.6, 3, 14 + i, i, .8, .26);
  for (let i = 0; i < 14; i++) bg += ring(cx - i * 1.8, 391 - i * 2.3, 162 - i * 7.2, 0, 20, 0, .8, .26 - i * .014);
  for (let i = 0; i < 11; i++) bg += ripple(cx, 492 + i * 7, 120 - i * 4, .28);
}
bg += `<path d="M566 128Q572 108 585 103H640Q650 112 652 128z" fill="#54738f" fill-opacity=".25"/><g fill="none" stroke="#9bb4c9" stroke-opacity=".3"><path d="M551 127q4-6 11-5M562 122l-5-10M566 118l-4-14" /><circle cx="574" cy="122" r="3"/><circle cx="597" cy="112" r="5"/><circle cx="618" cy="122" r="4"/><circle cx="642" cy="119" r="5"/><circle cx="657" cy="122" r="3"/></g>`;
document.getElementById("rings").innerHTML = bg;

const seg = new Intl.Segmenter("th");
document.querySelectorAll("[data-w]").forEach(e => {
  const rg = document.createRange();
  rg.selectNodeContents(e);
  const n = [...seg.segment(e.textContent)].length;
  e.style.letterSpacing = ((+e.dataset.w - rg.getBoundingClientRect().width) / n).toFixed(3) + "px";
});
```
